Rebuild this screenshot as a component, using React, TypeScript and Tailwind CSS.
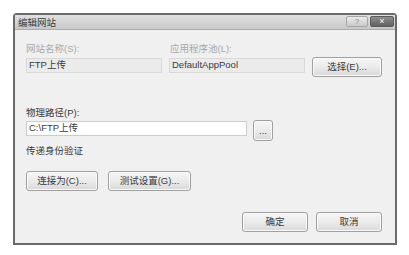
import React from "react";

const font = "font-['Liberation_Sans','Noto_Sans_CJK_SC',sans-serif]";

const Btn: React.FC<{ label: string; className?: string }> = ({ label, className }) => (
  <button
    className={`flex items-center justify-center rounded-[3px] border border-[#a0a0a0] bg-gradient-to-b from-[#f6f6f6] via-[#ebebeb] to-[#d9d9d9] text-[9.5px] leading-none text-[#3a3a3a] shadow-[inset_0_0_0_1px_#fafafa] ${className ?? ""}`}
  >
    {label}
  </button>
);

const App: React.FC = () => {
  return (
    <div className={`w-[409px] h-[255px] bg-white pt-[13px] pl-[13px] ${font}`}>
      <div className="flex flex-col w-[384px] h-[232px] border-2 border-[#6a6a6a] rounded-t-[4px] bg-[#f0f0f0]">
        {/* title bar */}
        <div className="flex items-start h-[15px] bg-gradient-to-b from-[#e0e0e0] to-[#c8c8c8] border-b border-[#ababab]">
          <span className="mt-[2px] ml-[3px] text-[9.5px] leading-[12px] text-[#3a3a3a]">编辑网站</span>
          <div className="ml-auto mr-[1px] mt-[1px] flex gap-[2px]">
            <div className="flex items-center justify-center w-[22px] h-[11px] rounded-[2px] border border-[#a6a6a6] bg-gradient-to-b from-[#ebebeb] to-[#cacaca] text-[8px] leading-none text-[#888]">
              ?
            </div>
            <div className="flex items-center justify-center w-[24px] h-[11px] rounded-[2px] border border-[#5a5a5a] bg-gradient-to-b from-[#8e8e8e] to-[#626262] text-[9px] leading-none text-white">
              ×
            </div>
          </div>
        </div>

        {/* body */}
        <div className="flex flex-col flex-1 pl-[11px] pr-[13px]">
          <div className="flex items-start gap-[7px] mt-[13px]">
            <div className="flex flex-col w-[136px]">
              <span className="text-[9.5px] leading-[12px] text-[#a8a8a8]">网站名称(S):</span>
              <div className="mt-[3px] h-[15px] px-[2px] flex items-center border border-[#d9d9d9] bg-[#ebebeb] text-[9.5px] text-[#3a3a3a]">
                FTP上传
              </div>
            </div>
            <div className="flex flex-col w-[136px]">
              <span className="ml-[1px] text-[9.5px] leading-[12px] text-[#a8a8a8]">应用程序池(L):</span>
              <div className="mt-[3px] h-[15px] px-[2px] flex items-center border border-[#d9d9d9] bg-[#ebebeb] text-[9.5px] text-[#3a3a3a]">
                DefaultAppPool
              </div>
            </div>
            <Btn label="选择(E)..." className="mt-[14px] w-[70px] h-[20px]" />
          </div>

          <span className="mt-[30px] text-[9.5px] leading-[12px] text-[#3a3a3a]">物理路径(P):</span>
          <div className="flex items-start gap-[6px] mt-[2px]">
            <div className="w-[221px] h-[15px] px-[2px] flex items-center border border-[#cccccc] bg-white text-[9.5px] text-[#3a3a3a]">
              C:\FTP上传
            </div>
            <Btn label="..." className="-mt-[1px] w-[20px] h-[21px]" />
          </div>

          <span className="mt-[4px] text-[9.5px] leading-[12px] text-[#3a3a3a]">传递身份验证</span>
          <div className="flex gap-[10px] mt-[14px]">
            <Btn label="连接为(C)..." className="w-[72px] h-[20px]" />
            <Btn label="测试设置(G)..." className="w-[83px] h-[20px]" />
          </div>

          <div className="flex justify-end gap-[8px] mt-[21px]">
            <Btn label="确定" className="w-[66px] h-[20px]" />
            <Btn label="取消" className="w-[66px] h-[20px]" />
          </div>
        </div>
      </div>
    </div>
  );
};

export default App;
